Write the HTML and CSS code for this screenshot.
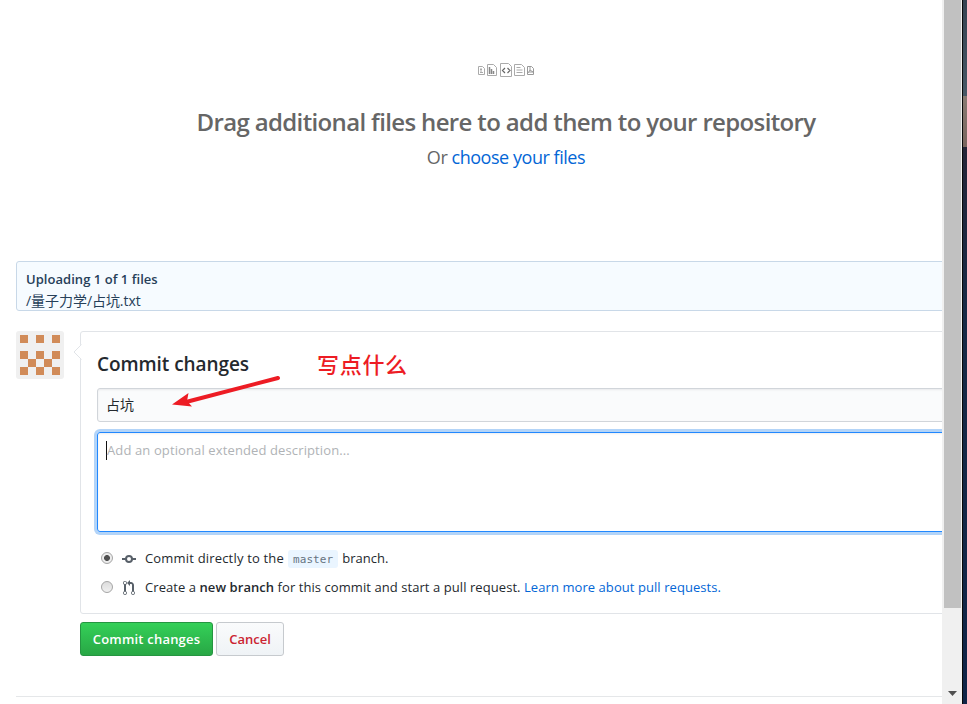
FILE: index.html
```
<!DOCTYPE html>
<html lang="en">
<head>
<meta charset="utf-8">
<title>Upload files</title>
<link rel="stylesheet" href="styles.css">
</head>
<body>
<div class="window">
  <main class="page">
    <section class="dropzone">
      <svg class="file-icons" width="58" height="16" viewBox="0 0 58 16" fill="none" stroke="#aaa">
        <path d="M1.5 4.5h4l2 2v6h-6zM4 6v5M3 7.500h2M3 10.500h3"/>
        <path d="M10.500 2.500h6l3 3v8h-9z"/>
        <path d="M12.500 5v7M14.500 7v5M16.500 9v3" stroke="#888" stroke-width="1.500"/>
        <path d="M23.500 1.500h8l3 3v10h-11z"/>
        <path d="M28 6l-2.500 2.500L28 11M30.500 6L33 8.500 30.500 11" stroke="#666" stroke-width="1.200"/>
        <path d="M37.500 2.500h7l3 3v8h-10zM39.500 5.500h4M39.500 8h6M39.500 10.500h6"/>
        <path d="M50.500 4.500h4l2 2v6h-6zM53 5v3l-2 3M53 8l3 2h-4" stroke="#999"/>
      </svg>
      <h2 class="drop-title"><span>Drag additional files here to add them to your repository</span></h2>
      <p class="drop-choose"><span>Or <a>choose your files</a></span></p>
    </section>
    <section class="upload">
      <div class="upload-title"><span>Uploading 1 of 1 files</span></div>
      <div class="upload-path"><span>/量子力学/占坑.txt</span></div>
    </section>
    <section class="commit">
      <svg class="avatar" width="48" height="48" viewBox="0 0 48 48">
        <rect width="48" height="48" rx="3" fill="#f0f0f0"/>
        <path fill="#d18b58" d="M4 4h8v8H4zM20 4h8v8h-8zM36 4h8v8h-8zM4 20h8v8H4zM20 20h8v8h-8zM36 20h8v8h-8zM12 28h8v8h-8zM28 28h8v8h-8zM4 36h8v8H4zM20 36h8v8h-8zM36 36h8v8h-8z"/>
      </svg>
      <div class="commit-main">
        <div class="commit-box">
          <svg class="caret" width="9" height="16" viewBox="0 0 9 16"><path d="M8.500 0v16L.7 8z" fill="#fff"/><path d="M8.500 .5L1 8l7.500 7.500" fill="none" stroke="#e1e4e8"/></svg>
          <h3 class="commit-title"><span>Commit changes</span></h3>
          <div class="summary">占坑</div>
          <div class="description"><i class="cursor"></i><span>Add an optional extended description...</span></div>
          <div class="choice">
            <i class="radio checked"></i>
            <svg class="choice-icon" width="14" height="16" viewBox="0 0 14 16" fill="none" stroke="#586069" stroke-width="2"><circle cx="7" cy="8" r="3"/><path d="M0 8h4M10 8h4"/></svg>
            <span class="direct">Commit directly to the</span><code>master</code><span class="branch">branch.</span>
          </div>
          <div class="choice">
            <i class="radio"></i>
            <svg class="choice-icon" width="14" height="16" viewBox="0 0 12 16" fill="#586069"><path fill-rule="evenodd" d="M11 11.280V5c-.03-.78-.34-1.470-.94-2.060C9.460 2.350 8.780 2.030 8 2H7V0L4 3l3 3V4h1c.27.020.48.110.69.310.21.200.3.420.31.690v6.280A1.993 1.993 0 0 0 10 15a1.993 1.993 0 0 0 1-3.720zm-1 2.920c-.66 0-1.200-.55-1.200-1.200 0-.65.55-1.200 1.200-1.200.65 0 1.200.55 1.200 1.200 0 .65-.55 1.200-1.200 1.200zM4 3c0-1.110-.89-2-2-2a1.993 1.993 0 0 0-1 3.720v6.560A1.993 1.993 0 0 0 2 15a1.993 1.993 0 0 0 1-3.720V4.720c.59-.34 1-.98 1-1.720zm-.8 10c0 .66-.55 1.200-1.200 1.200-.65 0-1.200-.55-1.200-1.200 0-.65.55-1.200 1.200-1.200.65 0 1.200.55 1.200 1.200zM2 4.200C1.340 4.200.8 3.650.8 3c0-.65.55-1.200 1.200-1.200.65 0 1.200.55 1.200 1.200 0 .65-.55 1.200-1.200 1.200z"/></svg>
            <span class="create">Create a <b>new branch</b> for this commit and start a pull request. <a>Learn more about pull requests.</a></span>
          </div>
        </div>
        <div class="actions">
          <div class="button primary"><span>Commit changes</span></div>
          <div class="button danger"><span>Cancel</span></div>
        </div>
      </div>
    </section>
    <hr>
  </main>
  <div class="scrollbar"><div class="thumb"></div><svg width="9" height="5" viewBox="0 0 9 5"><path d="M0 0h9L4.500 5z" fill="#505050"/></svg></div>
  <div class="desktop"><div class="sky"></div><div class="stone"></div><div class="night"></div></div>
</div>
<div class="note">写点什么</div>
<svg class="arrow" width="112" height="40" viewBox="0 0 112 40"><path d="M16 28L108 4" stroke="#ed1c24" stroke-width="4" stroke-linecap="round"/><path d="M2 30.500L18.500 19l-1.500 8 5 5.500z" fill="#ed1c24"/></svg>
</body>
</html>
```
FILE: styles.css
```
* { box-sizing: border-box; }
body {
  margin: 0;
  width: 967px;
  height: 704px;
  overflow: hidden;
  background: #fff;
  color: #24292e;
  font: 14px/21px "Open Sans", "Noto Sans CJK SC", sans-serif;
}
h2, h3, p { margin: 0; white-space: nowrap; }
a { color: #0366d6; }
.window { display: flex; height: 704px; }
.page { width: 942px; padding-left: 16px; overflow: hidden; flex: none; }
.dropzone {
  width: 980px;
  height: 261px;
  padding-top: 62px;
  display: flex;
  flex-direction: column;
  align-items: center;
  color: #666;
}
.file-icons { display: block; }
.drop-title { margin-top: 26px; font-size: 24px; line-height: 36px; font-weight: 600; letter-spacing: -.64px; }
.drop-choose { margin-top: 3px; font-size: 18px; line-height: 28px; letter-spacing: -.46px; }
.upload {
  width: 980px;
  height: 50px;
  padding: 7px 9px;
  border: 1px solid #c8d8e8;
  border-radius: 3px;
  background: #f6fbff;
  color: #264059;
  font-size: 13px;
}
.upload-title { font-weight: 600; letter-spacing: .04px; }
.upload-path { font-size: 14px; letter-spacing: -.05px; }
.commit { display: flex; gap: 16px; margin-top: 20px; width: 980px; }
.avatar { flex: none; }
.commit-main { flex: 1; }
.commit-box {
  position: relative;
  height: 283px;
  padding: 16px;
  border: 1px solid #e1e4e8;
  border-radius: 3px;
}
.caret { position: absolute; left: -8px; top: 12px; }
.commit-title { font-size: 19px; line-height: 32px; font-weight: 600; letter-spacing: -.07px; }
.summary {
  height: 34px;
  margin-top: 8px;
  padding: 5px 8px;
  border: 1px solid #d1d5da;
  border-radius: 3px;
  background: #fafbfc;
  box-shadow: inset 0 1px 2px rgba(27,31,35,.075);
}
.description {
  display: flex;
  height: 100px;
  margin-top: 10px;
  padding: 7px 8px;
  border: 1px solid #2188ff;
  border-radius: 3px;
  box-shadow: inset 0 1px 2px rgba(27,31,35,.075), 0 0 0 3px #b3d4f8;
  color: #b0b3b6;
  font-size: 13px;
  letter-spacing: .12px;
}
.cursor { width: 1px; height: 19px; margin-top: 1px; background: #111; }
.choice { display: flex; align-items: center; height: 29px; padding-left: 4px; white-space: nowrap; }
.description + .choice { margin-top: 12px; }
.radio {
  width: 12px;
  height: 12px;
  margin-bottom: 1px;
  border: 1px solid #a5a5a5;
  border-radius: 50%;
  background: linear-gradient(#dcdcdc, #f0f0f0);
  flex: none;
}
.checked { background: radial-gradient(circle, #505050 0 2.6px, #ececec 3.3px); }
.choice-icon { margin: 0 9px; flex: none; }
code {
  height: 18px;
  margin: 1px 4px 0 4px;
  padding: 0 5px;
  border-radius: 3px;
  background: #eaf5ff;
  color: #667380;
  font: 11px/19px "DejaVu Sans Mono", monospace;
  letter-spacing: .1px;
}
.choice span { font-size: 13px; }
.choice .direct { letter-spacing: .18px; }
.choice .create { letter-spacing: .067px; }
b { font-weight: 600; }
.actions { display: flex; gap: 3px; margin-top: 8px; }
.button {
  display: flex;
  align-items: center;
  justify-content: center;
  height: 34px;
  border: 1px solid #c6cace;
  border-radius: 3px;
  font-size: 13px;
  font-weight: 600;
  white-space: nowrap;
}
.primary { width: 133px; border-color: #259541; background: linear-gradient(#34d058, #28a745); color: #fff; letter-spacing: .2px; }
.danger { width: 68px; background: linear-gradient(#fafbfc, #eff3f6); color: #cb2431; }
hr { width: 980px; height: 1px; margin: 40px 0 0; border: 0; background: #e5e7e9; }
.scrollbar {
  display: flex;
  flex-direction: column;
  align-items: center;
  justify-content: space-between;
  width: 20px;
  padding: 0 1px 8px 2px;
  background: #f0f0f0;
}
.thumb { width: 17px; height: 608px; background: #c1c1c1; }
.desktop { display: flex; flex-direction: column; width: 5px; border-left: 1px solid #080808; }
.sky { height: 96px; background: linear-gradient(#354251, #485866); }
.stone { height: 51px; background: linear-gradient(#887a72, #7a655e); }
.night { flex: 1; background: linear-gradient(#252538, #182a46 30%, #102447); }
.note {
  position: absolute;
  left: 317px;
  top: 348px;
  color: #ed1c24;
  font: 500 22px/30px "Noto Sans CJK SC", sans-serif;
  letter-spacing: .7px;
}
.arrow { position: absolute; left: 170px; top: 374px; }
```
